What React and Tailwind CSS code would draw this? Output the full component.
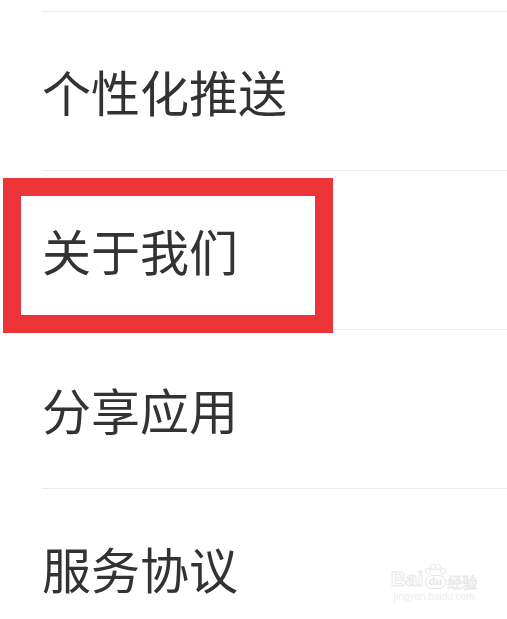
const items = ["个性化推送", "关于我们", "分享应用", "服务协议"];

export default function App() {
  return (
    <div
      className="relative w-[507px] h-[619px] overflow-hidden bg-white"
      style={{ fontFamily: '"Noto Sans CJK SC", "Noto Sans", sans-serif' }}
    >
      <div className="pt-[11px] pl-[42px]">
        {items.map((t) => (
          <div key={t} className="border-t border-[#ececec] h-[159px] flex items-center pb-[1px]">
            <span className="text-[49px] leading-none text-[#333333]">{t}</span>
          </div>
        ))}
      </div>

      {/* highlight box */}
      <div className="absolute left-[3px] top-[178px] w-[330px] h-[155px] border-[18px] border-[#ec3539]" />

      {/* watermark */}
      <div className="absolute left-[389px] top-[563px] w-[90px] flex flex-col items-center leading-none text-[#eeeeee]">
        <div className="flex items-end gap-[1px]">
          <span
            className="text-[21px] font-bold text-transparent [-webkit-text-stroke:1px_#e8e8e8]"
            style={{ fontFamily: '"Liberation Sans", sans-serif' }}
          >
            Bai
          </span>
          <div className="flex flex-col items-center">
            <svg width="22" height="12" viewBox="0 0 22 12" fill="none" stroke="#e8e8e8" strokeWidth="1">
              <ellipse cx="4" cy="8" rx="2.5" ry="3" />
              <ellipse cx="9" cy="4" rx="2.5" ry="3" />
              <ellipse cx="14" cy="4" rx="2.5" ry="3" />
              <ellipse cx="19" cy="8" rx="2.5" ry="3" />
            </svg>
            <span
              className="text-[11px] font-bold rounded-full border border-[#e8e8e8] px-[3px] pb-[1px] text-[#e8e8e8]"
              style={{ fontFamily: '"Liberation Sans", sans-serif' }}
            >
              du
            </span>
          </div>
          <span className="text-[15px] text-transparent [-webkit-text-stroke:0.8px_#e8e8e8]">经验</span>
        </div>
        <span className="text-[10px] mt-[3px] text-[#ededed]" style={{ fontFamily: '"Liberation Sans", sans-serif' }}>
          jingyan.baidu.com
        </span>
      </div>
    </div>
  );
}
